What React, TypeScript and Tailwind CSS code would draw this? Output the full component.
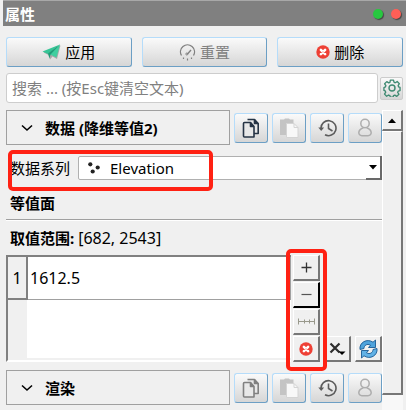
import React, { useState } from 'react';

// ============================================================================
// ICONS
// ============================================================================

const PlaneIcon = () => (
  <svg width="19" height="16" viewBox="0 0 19 16">
    <path d="M1.500 8.500 18.500 1.500 15 15 10.500 12.500 8 15.500 6.500 11z" fill="#777" opacity=".55" />
    <path d="M0.500 7.500 18 .5 6 10z" fill="#35c596" />
    <path d="M18 .5 14.500 13.500 7 10z" fill="#3fcf9f" />
    <path d="M18 .5 6 9.500 7.500 14.500 8.500 10.500z" fill="#1f9d78" />
  </svg>
);

const GaugeIcon = () => (
  <svg width="17" height="17" viewBox="0 0 17 17" fill="none" stroke="#808080">
    <path d="M2.500 11.500A7 7 0 1 1 14.500 11.500" strokeWidth="1.300" />
    <path d="M8.500 10 12 6" strokeWidth="1.300" />
    <circle cx="7.800" cy="10" r="1" />
    <path d="M4.500 13.500v1.500M8.500 14.500v2M12.500 13.500v1.500" strokeWidth="1.200" />
  </svg>
);

const DeleteIcon = () => (
  <svg width="14" height="14" viewBox="0 0 14 14">
    <circle cx="7" cy="7" r="6.700" fill="#ee4035" />
    <path d="M4.900 4.900 9.100 9.100M9.100 4.900 4.900 9.100" stroke="#fff" strokeWidth="2.600" strokeLinecap="round" />
    <circle cx="7" cy="7" r=".7" fill="#f4877f" />
  </svg>
);

const GearIcon = () => (
  <svg width="18" height="18" viewBox="0 0 24 24" fill="none" stroke="#3f8a72" strokeWidth="1.900" strokeLinejoin="round">
    <path d="M9.800 1.500h4.400l.7 3 1.700.8 2.800-1.700 3 3-1.700 2.700.7 1.800 2 .7v4.400l-2.500.7-.8 1.800 1.700 2.700-3 3-2.700-1.700-1.900.8-.6 2H9.800l-.7-2.300-1.800-.7-2.700 1.700-3-3 1.700-2.700-.8-1.800L.8 16v-4l2-.8.700-1.800L1.800 6.700l3-3 2.700 1.700 1.700-.8z" transform="translate(.5 0) scale(.95)" />
    <circle cx="12" cy="12" r="4" />
  </svg>
);

const ChevronIcon = () => (
  <svg width="12" height="8" viewBox="0 0 12 8" fill="none" stroke="#000" strokeWidth="1.600">
    <path d="M1 1.500 6 6 11 1.500" />
  </svg>
);

const CopyIcon = ({ dimmed }: { dimmed?: boolean }) => (
  <svg width="18" height="20" viewBox="0 0 18 20" fill="#e8e8e8" stroke={dimmed ? '#808080' : '#263445'} strokeWidth="1.600" strokeLinejoin="round">
    <path d="M5.500 1.500h7l3.700 4V15.500h-5" />
    <path d="M2.500 4.500h6l3.500 4v10.500h-9.500q-1 0-1-1V5.500q0-1 1-1z" />
    <path d="M8.500 4.500v4H12M12.500 1.500v4h3.700" fill={dimmed ? '#808080' : '#263445'} />
  </svg>
);

const PasteIcon = () => (
  <svg width="20" height="20" viewBox="0 0 20 20">
    <path d="M1 1.500h4l1-1h4l1 1h3.500V17H1z" fill="#c4c4c4" />
    <path d="M7.500 5.500h7.500l4 4v10H7.500z" fill="#f8f8f8" stroke="#d4d4d4" />
    <path d="M15 5.500v4h4" fill="none" stroke="#d4d4d4" />
  </svg>
);

const HistoryIcon = () => (
  <svg width="19" height="18" viewBox="0 0 19 18" fill="none" stroke="#5c5c5c" strokeWidth="1.600">
    <path d="M3 9.500A7.500 7.500 0 1 1 7 15.800" />
    <path d="M10.500 4.500v5l4 2.500" />
    <path d="M.3 8.500h5.800L3.200 12z" fill="#5c5c5c" stroke="none" />
  </svg>
);

const PersonIcon = () => (
  <svg width="14" height="19" viewBox="0 0 14 19" fill="none" stroke="#adadad" strokeWidth="1.500">
    <circle cx="7" cy="5.500" r="4.200" />
    <path d="M5.500 9.700C-1 12 0 17.700 4 17.700h6C14 17.700 15 12 8.500 9.700" />
  </svg>
);

const PointsIcon = () => (
  <svg width="12" height="12" viewBox="0 0 12 12" fill="#222">
    <circle cx="2.300" cy="2.300" r="2.100" />
    <circle cx="9.700" cy="5.500" r="2.100" />
    <circle cx="4.700" cy="9.500" r="2.100" />
  </svg>
);

const ArrowIcon = () => (
  <svg width="8" height="5" viewBox="0 0 8 5">
    <path d="M0 0h8L4 4.500z" />
  </svg>
);

const PlusIcon = () => (
  <svg width="11" height="11" viewBox="0 0 11 11" stroke="#333" strokeWidth="1.300">
    <path d="M5.500.5v10M.5 5.500h10" />
  </svg>
);

const MinusIcon = () => (
  <svg width="11" height="11" viewBox="0 0 11 11" stroke="#555" strokeWidth="1.200">
    <path d="M.5 5.500h10" />
  </svg>
);

const RangeIcon = () => (
  <svg width="17" height="7" viewBox="0 0 17 7" stroke="#99998c" strokeWidth="1">
    <path d="M.5 3.500h16M.5.5v6M16.500.5v6M6.500 1.500v4M11.500 1.500v4" />
  </svg>
);

const ClearIcon = () => (
  <svg width="17" height="14" viewBox="0 0 17 14">
    <path d="M1.500 1.500 10.500 10.500M10.500 1.500 1.500 10.500" stroke="#2d2d2d" strokeWidth="2.200" />
    <path d="M9.500 9.500h7L13 13z" />
  </svg>
);

const RefreshIcon = () => (
  <svg width="19" height="20" viewBox="0 0 19 20" stroke="#1b5a93" strokeWidth=".9" strokeLinejoin="round">
    <path d="M1 10.500C0 3.500 8-1 14 3.200L16.500 1v7.500H9.500l2-2.300C8 4.200 5 6.500 5 9.500z" fill="#4ea3dc" />
    <path d="M18 9.500c1 7-7 11.500-13 7.300L2.500 19v-7.500h7l-2 2.300c3.500 2 6.500-.3 6.500-3.300z" fill="#62b2e6" />
  </svg>
);

// ============================================================================
// CONTROLS
// ============================================================================

const GLOSSY =
  'flex items-center justify-center rounded-[3px] border border-t-[#b5dcfa] border-l-[#b5dcfa] border-r-[#6c9fc5] border-b-[#6c9fc5] bg-linear-to-b from-[#fafafa] to-[#d6d6d6]';

const RAISED =
  'flex h-[26px] w-[27px] items-center justify-center border-t border-l border-r-2 border-b-2 border-t-white border-l-white bg-[#f0f0f0]';

interface ActionButtonProps {
  icon: React.ReactNode;
  label: string;
  disabled?: boolean;
}

const ActionButton: React.FC<ActionButtonProps> = ({ icon, label, disabled }) => (
  <button disabled={disabled} className={`${GLOSSY} h-[30px] flex-1 gap-1 disabled:text-[#808080]`}>
    {icon}
    <span>{label}</span>
  </button>
);

interface ToolButtonProps {
  icon: React.ReactNode;
  label: string;
  focused?: boolean;
}

const ToolButton: React.FC<ToolButtonProps> = ({ icon, label, focused }) => (
  <button
    aria-label={label}
    className={`${RAISED} ${focused ? 'border-r-black border-b-black' : 'border-r-[#777] border-b-[#777]'}`}
  >
    {icon}
  </button>
);

interface SectionHeaderProps {
  title: string;
  copyDisabled?: boolean;
}

const SectionHeader: React.FC<SectionHeaderProps> = ({ title, copyDisabled }) => {
  const [open, setOpen] = useState(true);

  return (
    <div className="flex items-center gap-1">
      <button
        aria-expanded={open}
        onClick={() => setOpen(!open)}
        className="flex h-[35px] flex-1 items-center gap-3 border border-[#a0a0a0] pl-[14px] font-bold"
      >
        <ChevronIcon />
        <span>{title}</span>
      </button>
      <button aria-label="复制" disabled={copyDisabled} className={`${GLOSSY} h-[30px] w-[34px]`}>
        <CopyIcon dimmed={copyDisabled} />
      </button>
      <button aria-label="粘贴" disabled className={`${GLOSSY} h-[30px] w-[34px]`}>
        <PasteIcon />
      </button>
      <button aria-label="恢复默认" className={`${GLOSSY} h-[30px] w-[34px]`}>
        <HistoryIcon />
      </button>
      <button aria-label="保存默认" disabled className={`${GLOSSY} h-[30px] w-[34px]`}>
        <PersonIcon />
      </button>
    </div>
  );
};

const ValueTable = () => (
  <div className="flex flex-1 border-t-2 border-b-2 border-l-2 border-t-[#808080] border-b-white border-l-[#808080]">
    <div className="flex-1 border-b-2 border-[#f0f0f0] bg-linear-to-r from-[#f0f0f0] from-[19px] to-white to-[19px]">
      <table className="h-[43px] w-full border-collapse text-base leading-5">
        <tbody>
          <tr>
            <th scope="row" className="w-[19px] border-r-2 border-b-2 border-[#808080] p-0 font-normal">
              1
            </th>
            <td className="border-r border-b border-[#a0a0a0] bg-white p-0 pl-[2px]">1612.5</td>
          </tr>
        </tbody>
      </table>
    </div>
  </div>
);

// ============================================================================
// PROPERTIES PANEL
// ============================================================================

export default function App() {
  const [search, setSearch] = useState('');

  return (
    <div className="flex min-h-screen flex-col bg-[#f0f0f0] font-['Noto_Sans','Noto_Sans_CJK_SC',sans-serif] text-[15px] leading-5 text-black">
      {/* Title bar */}
      <header className="ml-[3px] flex h-[26px] items-center justify-between border-t border-[#a8a8a8] bg-[#808080] pr-[5px] pl-[2px]">
        <h1 className="font-bold text-white">属性</h1>
        <div className="flex gap-2">
          <button aria-label="浮动" className="size-[10px] rounded-full bg-[#28c840] shadow-[1px_1px_1px_#444]" />
          <button aria-label="关闭" className="size-[10px] rounded-full bg-[#ff5f57] shadow-[1px_1px_1px_#444]" />
        </div>
      </header>

      {/* Actions */}
      <div className="flex gap-[10px] pt-[11px] pr-[3px] pl-[6px]">
        <ActionButton icon={<PlaneIcon />} label="应用" />
        <ActionButton icon={<GaugeIcon />} label="重置" disabled />
        <ActionButton icon={<DeleteIcon />} label="删除" />
      </div>

      {/* Search */}
      <div className="flex items-center gap-[2px] pt-[6px] pr-[3px] pl-[6px]">
        <input
          type="text"
          aria-label="搜索"
          value={search}
          onChange={(e) => setSearch(e.target.value)}
          placeholder="搜索 ... (按Esc键清空文本)"
          className="h-[30px] min-w-0 flex-1 rounded-[3px] border border-[#cdcdcd] bg-white px-[5px] placeholder:text-[#808080]"
        />
        <button
          aria-label="高级"
          className="flex size-[23px] items-center justify-center rounded-[2px] border border-[#ccc] bg-linear-to-b from-[#fafafa] to-[#d6d6d6]"
        >
          <GearIcon />
        </button>
      </div>

      {/* Scroll area */}
      <div className="flex flex-1 pt-[7px] pr-[3px] pl-[6px]">
        <main className="flex min-w-0 flex-1 flex-col">
          <SectionHeader title="数据 (降维等值2)" />

          <div className="relative mt-[11px] flex items-center gap-2 pl-1">
            <label htmlFor="series">数据系列</label>
            <div className="relative flex-1">
              <select
                id="series"
                className="h-6 w-full appearance-none rounded-[2px] border border-[#b0b0b0] bg-white pl-[31px]"
              >
                <option>Elevation</option>
              </select>
              <span className="pointer-events-none absolute top-[6px] left-[10px]">
                <PointsIcon />
              </span>
              <span className="pointer-events-none absolute inset-y-0 right-0 flex w-4 items-center justify-center border-r-2 border-b-2 border-[#696969]">
                <ArrowIcon />
              </span>
            </div>
            <div className="pointer-events-none absolute -top-[6px] left-[2px] h-[41px] w-[205px] rounded-[5px] border-4 border-[#ff2113]" />
          </div>

          <h2 className="mt-[13px] border-b border-[#a0a0a0] pb-[6px] pl-1 font-bold shadow-[0_1px_0_#fff]">等值面</h2>
          <p className="mt-2 pl-1">
            <b>取值范围:</b> <span className="text-base leading-5">[682, 2543]</span>
          </p>

          <div className="mt-[7px] flex gap-[2px]">
            <ValueTable />
            <div className="flex items-end gap-1">
              <div className="relative flex flex-col gap-px">
                <ToolButton icon={<PlusIcon />} label="添加" />
                <ToolButton icon={<MinusIcon />} label="移除" focused />
                <ToolButton icon={<RangeIcon />} label="添加范围" />
                <ToolButton icon={<DeleteIcon />} label="全部删除" />
                <div className="pointer-events-none absolute -top-[6px] -right-[7px] -bottom-[9px] -left-[7px] rounded-[5px] border-4 border-[#ff2113]" />
              </div>
              <ToolButton icon={<ClearIcon />} label="清除" />
              <ToolButton icon={<RefreshIcon />} label="刷新" />
            </div>
          </div>

          <div className="mt-2">
            <SectionHeader title="渲染" copyDisabled />
          </div>
        </main>

        {/* Scrollbar */}
        <div className="flex w-[21px] flex-col">
          <button
            aria-label="向上滚动"
            className="flex h-[21px] items-center justify-center border-t border-r-2 border-b-2 border-l border-t-white border-r-[#777] border-b-[#777] border-l-white"
          >
            <span className="rotate-180">
              <ArrowIcon />
            </span>
          </button>
          <div className="flex-1 border-t border-r-2 border-b-2 border-l border-t-white border-r-[#777] border-b-[#777] border-l-white" />
          <div className="h-[15px] bg-[#f8f8f8]" />
        </div>
      </div>
    </div>
  );
}
